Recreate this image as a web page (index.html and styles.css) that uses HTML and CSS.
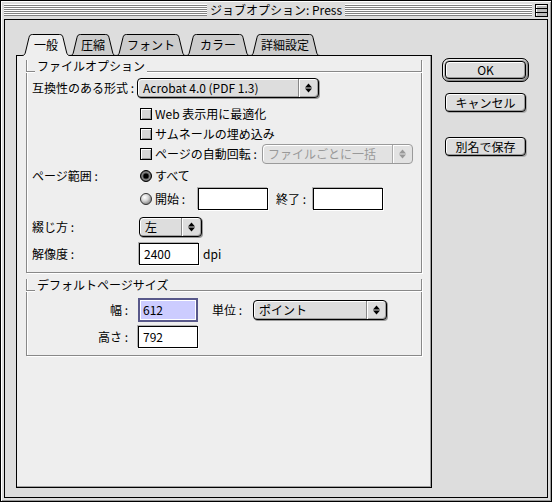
FILE: index.html
```html
<!DOCTYPE html>
<html lang="ja">
<head>
<meta charset="utf-8">
<title>ジョブオプション: Press</title>
<link rel="stylesheet" href="styles.css">
</head>
<body>
<div class="window">
  <div class="titlebar">
    <div class="stripes"></div>
    <div class="title">ジョブオプション: Press</div>
    <div class="tb-right">
      <div class="stripes"></div>
      <svg class="collapse" width="13" height="13" viewBox="0 0 13 13">
        <rect x="0.5" y="0.5" width="12" height="12" fill="#bbb" stroke="#000"/>
        <path d="M1.5 11.5V1.5H11.5" stroke="#fff" fill="none"/>
        <path d="M1 4.5H12M1 8.5H12" stroke="#000" fill="none"/>
      </svg>
    </div>
  </div>

  <div class="frame">
    <div class="main">
      <div class="tabs">
        <div class="tab t1 sel">
          <svg width="48" height="23" viewBox="0 0 48 23">
            <path class="fill" d="M0,21.5 C2.5,21.5 3,20 3.5,18 L7,3.5 C7.5,1.3 8.5,0.5 10.5,0.5 L37.5,0.5 C39.5,0.5 40.5,1.3 41,3.5 L44.5,18 C45,20 45.5,21.5 48,21.5 L48,23 L0,23 Z"/>
            <path class="edge" d="M0,21.5 C2.5,21.5 3,20 3.5,18 L7,3.5 C7.5,1.3 8.5,0.5 10.5,0.5 L37.5,0.5 C39.5,0.5 40.5,1.3 41,3.5 L44.5,18 C45,20 45.5,21.5 48,21.5"/>
          </svg>
          <span>一般</span>
        </div>
        <div class="tab t2">
          <svg width="46" height="23" viewBox="0 0 46 23">
            <path class="fill" d="M0,21.5 C2.5,21.5 3,20 3.5,18 L7,3.5 C7.5,1.3 8.5,0.5 10.5,0.5 L35.5,0.5 C37.5,0.5 38.5,1.3 39,3.5 L42.5,18 C43,20 43.5,21.5 46,21.5 L46,23 L0,23 Z"/>
            <path class="edge" d="M0,21.5 C2.5,21.5 3,20 3.5,18 L7,3.5 C7.5,1.3 8.5,0.5 10.5,0.5 L35.5,0.5 C37.5,0.5 38.5,1.3 39,3.5 L42.5,18 C43,20 43.5,21.5 46,21.5"/>
          </svg>
          <span>圧縮</span>
        </div>
        <div class="tab t3">
          <svg width="70" height="23" viewBox="0 0 70 23">
            <path class="fill" d="M0,21.5 C2.5,21.5 3,20 3.5,18 L7,3.5 C7.5,1.3 8.5,0.5 10.5,0.5 L59.5,0.5 C61.5,0.5 62.5,1.3 63,3.5 L66.5,18 C67,20 67.5,21.5 70,21.5 L70,23 L0,23 Z"/>
            <path class="edge" d="M0,21.5 C2.5,21.5 3,20 3.5,18 L7,3.5 C7.5,1.3 8.5,0.5 10.5,0.5 L59.5,0.5 C61.5,0.5 62.5,1.3 63,3.5 L66.5,18 C67,20 67.5,21.5 70,21.5"/>
          </svg>
          <span>フォント</span>
        </div>
        <div class="tab t4">
          <svg width="64" height="23" viewBox="0 0 64 23">
            <path class="fill" d="M0,21.5 C2.5,21.5 3,20 3.5,18 L7,3.5 C7.5,1.3 8.5,0.5 10.5,0.5 L53.5,0.5 C55.5,0.5 56.5,1.3 57,3.5 L60.5,18 C61,20 61.5,21.5 64,21.5 L64,23 L0,23 Z"/>
            <path class="edge" d="M0,21.5 C2.5,21.5 3,20 3.5,18 L7,3.5 C7.5,1.3 8.5,0.5 10.5,0.5 L53.5,0.5 C55.5,0.5 56.5,1.3 57,3.5 L60.5,18 C61,20 61.5,21.5 64,21.5"/>
          </svg>
          <span>カラー</span>
        </div>
        <div class="tab t5">
          <svg width="70" height="23" viewBox="0 0 70 23">
            <path class="fill" d="M0,21.5 C2.5,21.5 3,20 3.5,18 L7,3.5 C7.5,1.3 8.5,0.5 10.5,0.5 L59.5,0.5 C61.5,0.5 62.5,1.3 63,3.5 L66.5,18 C67,20 67.5,21.5 70,21.5 L70,23 L0,23 Z"/>
            <path class="edge" d="M0,21.5 C2.5,21.5 3,20 3.5,18 L7,3.5 C7.5,1.3 8.5,0.5 10.5,0.5 L59.5,0.5 C61.5,0.5 62.5,1.3 63,3.5 L66.5,18 C67,20 67.5,21.5 70,21.5"/>
          </svg>
          <span>詳細設定</span>
        </div>
      </div>

      <div class="panel">
        <div class="group">
          <div class="group-head"><span class="gl gl-start"></span><span class="gtitle">ファイルオプション</span><span class="gl gl-end"></span></div>
          <div class="group-body">
            <div class="row h20 mt6">
              <span class="lbl lbl-compat">互換性のある形式 :</span>
              <div class="popup pop-acro"><span class="val">Acrobat 4.0 (PDF 1.3)</span><span class="arr"><svg width="7" height="10" viewBox="0 0 7 10"><path d="M3.5 0.5L7 4.5H0z M0 5.5H7L3.5 9.5z"/></svg></span></div>
            </div>
            <div class="row h20 mt6">
              <span class="indent"></span><span class="cb"></span><span class="cb-lbl">Web 表示用に最適化</span>
            </div>
            <div class="row h19">
              <span class="indent"></span><span class="cb"></span><span class="cb-lbl">サムネールの埋め込み</span>
            </div>
            <div class="row h20 mt1">
              <span class="indent"></span><span class="cb"></span><span class="cb-lbl lbl-rot">ページの自動回転 :</span>
              <div class="popup dis pop-rot"><span class="val">ファイルごとに一括</span><span class="arr"><svg width="7" height="10" viewBox="0 0 7 10"><path d="M3.5 0.5L7 4.5H0z M0 5.5H7L3.5 9.5z"/></svg></span></div>
            </div>
            <div class="row h20 mt2">
              <span class="lbl lbl-range">ページ範囲 :</span>
              <svg class="radio" width="12" height="12" viewBox="0 0 12 12">
                <circle cx="6" cy="6" r="5.5" fill="#5a5a5a" stroke="#000"/>
                <circle cx="6" cy="6" r="4" fill="none" stroke="#888" stroke-width="1"/>
                <circle cx="6" cy="6" r="2.6" fill="#000"/>
              </svg>
              <span class="cb-lbl">すべて</span>
            </div>
            <div class="row h22 mt2">
              <span class="indent"></span>
              <svg class="radio" width="12" height="12" viewBox="0 0 12 12">
                <defs>
                  <radialGradient id="rg" cx="0.38" cy="0.35" r="0.7">
                    <stop offset="0" stop-color="#fff"/>
                    <stop offset="0.45" stop-color="#d8d8d8"/>
                    <stop offset="1" stop-color="#7a7a7a"/>
                  </radialGradient>
                </defs>
                <circle cx="6" cy="6" r="5.5" fill="url(#rg)" stroke="#333"/>
              </svg>
              <span class="cb-lbl lbl-start">開始 :</span>
              <span class="tf w70"></span>
              <span class="lbl-end">終了 :</span>
              <span class="tf w70"></span>
            </div>
            <div class="row h20 mt7">
              <span class="lbl">綴じ方 :</span>
              <div class="popup pop-side"><span class="val">左</span><span class="arr"><svg width="7" height="10" viewBox="0 0 7 10"><path d="M3.5 0.5L7 4.5H0z M0 5.5H7L3.5 9.5z"/></svg></span></div>
            </div>
            <div class="row h22 mt6">
              <span class="lbl">解像度 :</span>
              <span class="tf w60">2400</span>
              <span class="unit">dpi</span>
            </div>
          </div>
        </div>

        <div class="group g2">
          <div class="group-head"><span class="gl gl-start"></span><span class="gtitle">デフォルトページサイズ</span><span class="gl gl-end"></span></div>
          <div class="group-body">
            <div class="row h24 mt7">
              <span class="lbl-r">幅 :</span>
              <span class="tf focus w60 ml10"><span class="hl">612</span></span>
              <span class="lbl-unit">単位 :</span>
              <div class="popup pop-unit"><span class="val">ポイント</span><span class="arr"><svg width="7" height="10" viewBox="0 0 7 10"><path d="M3.5 0.5L7 4.5H0z M0 5.5H7L3.5 9.5z"/></svg></span></div>
            </div>
            <div class="row h22 mt4">
              <span class="lbl-r">高さ :</span>
              <span class="tf w60 ml10">792</span>
            </div>
          </div>
        </div>
      </div>
    </div>

    <div class="buttons">
      <div class="ring"><div class="btn">OK</div></div>
      <div class="btn plain cancel">キャンセル</div>
      <div class="btn plain saveas">別名で保存</div>
    </div>
  </div>
</div>
</body>
</html>
```

FILE: styles.css
```css
* { box-sizing: border-box; }

html, body {
  margin: 0;
  padding: 0;
}

body {
  width: 552px;
  height: 502px;
  overflow: hidden;
  background: #fff;
  color: #000;
  font-family: "Noto Sans CJK JP", "Noto Sans", sans-serif;
  font-size: 12px;
  line-height: 12px;
}

.window {
  width: 552px;
  height: 502px;
  border: 1px solid #000;
  background: #dddddd;
  display: flex;
  flex-direction: column;
  box-shadow: inset 1px 1px 0 #fff, inset -1px -1px 0 #999;
}

/* title bar */
.titlebar {
  height: 18px;
  flex: none;
  display: grid;
  grid-template-columns: 1fr auto 1fr;
  align-items: center;
  column-gap: 3px;
  padding: 0 3px;
}

.stripes {
  height: 12px;
  background: repeating-linear-gradient(to bottom, #fff 0 1px, #808080 1px 2px);
}

.title {
  white-space: nowrap;
  line-height: 14px;
}

.tb-right {
  display: flex;
  align-items: center;
  gap: 3px;
}

.tb-right .stripes { flex: 1; }

.collapse {
  display: block;
  flex: none;
  margin-top: 1px;
}

/* content frame */
.frame {
  flex: 1;
  margin: 0 3px 3px;
  border: 1px solid #000;
  background: #dddddd;
  display: flex;
  align-items: flex-start;
  padding: 14px 0 0 11px;
}

.main {
  width: 416px;
  flex: none;
}

/* tabs */
.tabs {
  display: flex;
  height: 22px;
  margin: 0 0 -1px 6px;
}

.tab {
  position: relative;
  height: 22px;
  display: flex;
  align-items: center;
  justify-content: center;
}

.tab svg {
  position: absolute;
  left: 0;
  top: 0;
  overflow: visible;
}

.tab span {
  position: relative;
  line-height: 12px;
  white-space: nowrap;
}

.tab .fill { fill: #cccccc; }
.tab .edge { fill: none; stroke: #000; stroke-width: 1; }
.tab.sel { z-index: 2; }
.tab.sel .fill { fill: #eeeeee; }

.t1 { width: 48px; }
.t2 { width: 46px; }
.t3 { width: 70px; }
.t4 { width: 64px; }
.t5 { width: 70px; }

/* panel */
.panel {
  position: relative;
  z-index: 1;
  height: 433px;
  border: 1px solid #000;
  background: #eeeeee;
  padding: 4px 9px 0;
  box-shadow: inset -1px -1px 0 #a0a0a0;
}

/* group boxes */
.group {
  border: 1px solid #888;
  border-top: 0;
  box-shadow: inset 1px 0 0 #fff, 1px 1px 0 #fff;
}

.g2 { margin-top: 6px; }

.group-head {
  display: flex;
  height: 12px;
  margin: 0 -1px;
}

.gl {
  height: 12px;
  border-bottom: 1px solid #888;
  box-shadow: 0 1px 0 #fff;
}

.gl-start { width: 9px; flex: none; }
.gl-end { flex: 1; }

.gtitle {
  padding: 0 2px;
  line-height: 12px;
  white-space: nowrap;
}

.group-body {
  padding: 0 0 7px 5px;
}

/* rows */
.row {
  display: flex;
  align-items: center;
}

.h19 { height: 19px; }
.h20 { height: 20px; }
.h22 { height: 22px; }
.h24 { height: 24px; }

.mt1 { margin-top: 1px; }
.mt2 { margin-top: 2px; }
.mt4 { margin-top: 4px; }
.mt6 { margin-top: 6px; }
.mt7 { margin-top: 7px; }
.ml10 { margin-left: 10px; }

.lbl {
  width: 107px;
  flex: none;
  white-space: nowrap;
}

.lbl-compat { width: 105px; }
.lbl-range { width: 108px; }

.indent {
  width: 108px;
  flex: none;
}

.lbl-r {
  width: 96px;
  flex: none;
  text-align: right;
  white-space: nowrap;
}

.cb-lbl {
  margin-left: 3px;
  white-space: nowrap;
}

.lbl-rot { width: 107px; flex: none; }
.lbl-start { width: 43px; flex: none; }

.lbl-end {
  margin-left: 8px;
  width: 37px;
  flex: none;
  white-space: nowrap;
}

.lbl-unit {
  margin-left: 14px;
  width: 41px;
  flex: none;
  white-space: nowrap;
}

.unit { margin-left: 4px; }

/* checkbox & radio */
.cb {
  width: 12px;
  height: 12px;
  flex: none;
  border: 1px solid #000;
  background: #d6d6d6;
  box-shadow: inset 1px 1px 0 #fff, inset -1px -1px 0 #999;
}

.radio {
  display: block;
  flex: none;
}

/* popups */
.popup {
  flex: none;
  display: flex;
  height: 20px;
  border: 1px solid #000;
  border-radius: 4px;
  background: #dddddd;
  box-shadow: inset 1px 1px 0 #fff, inset -1px -1px 0 #a0a0a0, 1px 1px 0 #999;
}

.popup .val {
  flex: 1;
  display: flex;
  align-items: center;
  padding-left: 5px;
  white-space: nowrap;
  overflow: hidden;
}

.popup .arr {
  width: 20px;
  flex: none;
  display: flex;
  align-items: center;
  justify-content: center;
  border-left: 1px solid #888;
  box-shadow: inset 1px 0 0 #fff;
}

.popup .arr svg { display: block; fill: #000; }

.popup.dis {
  border-color: #9a9a9a;
  color: #999;
  background: #e2e2e2;
  box-shadow: inset 1px 1px 0 #fff;
}

.popup.dis .arr { border-left-color: #aaa; }
.popup.dis .arr svg { fill: #999; }

.pop-acro { width: 182px; }
.pop-rot { width: 151px; }
.pop-side { width: 63px; }
.pop-unit { width: 134px; }

/* text fields */
.tf {
  flex: none;
  display: flex;
  align-items: center;
  height: 22px;
  border: 1px solid #000;
  background: #fff;
  padding: 0 4px;
  box-shadow: -1px -1px 0 #b0b0b0, 1px 1px 0 #fff;
}

.w60 { width: 60px; }
.w70 { width: 70px; }

.tf.focus {
  height: 24px;
  border: 2px solid #58588a;
  padding: 1px;
  box-shadow: none;
}

.tf.focus .hl {
  display: flex;
  align-items: center;
  width: 100%;
  height: 100%;
  background: #ccccff;
  padding-left: 2px;
}

/* buttons */
.buttons {
  display: flex;
  flex-direction: column;
  align-items: flex-start;
  margin: 24px 0 0 10px;
}

.ring {
  border: 1px solid #000;
  border-radius: 7px;
  padding: 2px;
  background: #b4b4b4;
  box-shadow: inset 1px 1px 0 #eee, inset -1px -1px 0 #888;
}

.btn {
  width: 81px;
  height: 18px;
  border: 1px solid #000;
  border-radius: 4px;
  background: #dddddd;
  box-shadow: inset 1px 1px 0 #fff, inset -1px -1px 0 #999;
  display: flex;
  align-items: center;
  justify-content: center;
  white-space: nowrap;
}

.btn.plain {
  height: 19px;
  margin-left: 3px;
  box-shadow: inset 1px 1px 0 #fff, inset -1px -1px 0 #999, 1px 1px 0 #aaa;
}

.cancel { margin-top: 11px; }
.saveas { margin-top: 25px; }
```
